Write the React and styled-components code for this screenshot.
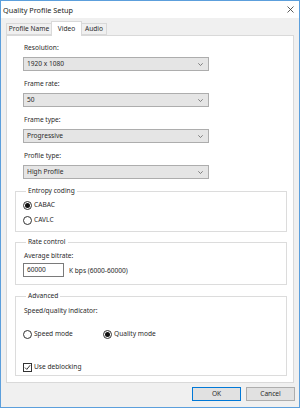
import React from "react";
import styled, { createGlobalStyle } from "styled-components";

const Global = createGlobalStyle`
  html, body { margin: 0; padding: 0; background: #fff; }
  body { font-family: "Noto Sans", "Open Sans", sans-serif; color: #2a2a2a; }
  * { box-sizing: border-box; }
`;

const Window = styled.div`
  width: 300px;
  height: 408px;
  border: 1px solid #5c9fdc;
  background: #f0f0f0;
  display: flex;
  flex-direction: column;
  font-size: 6.6px;
`;

const TitleBar = styled.div`
  height: 17px;
  background: #fff;
  display: flex;
  align-items: center;
  justify-content: space-between;
  padding: 0 5px 0 2px;
  flex-shrink: 0;
`;

const Title = styled.span`
  font-size: 7.3px;
  color: #222;
`;

const Body = styled.div`
  flex: 1;
  display: flex;
  flex-direction: column;
  padding: 3px 5px 0 5px;
`;

const TabStrip = styled.div`
  display: flex;
  align-items: flex-end;
  height: 14px;
`;

const Tab = styled.div`
  width: ${(p) => p.$w}px;
  height: ${(p) => (p.$active ? 15 : 12)}px;
  margin-bottom: ${(p) => (p.$active ? -1 : 0)}px;
  margin-left: ${(p) => (p.$first ? 0 : -1)}px;
  border: 1px solid #d9d9d9;
  border-bottom: ${(p) => (p.$active ? "none" : "1px solid #d9d9d9")};
  background: ${(p) => (p.$active ? "#fff" : "#f0f0f0")};
  position: relative;
  z-index: ${(p) => (p.$active ? 2 : 1)};
  display: flex;
  align-items: center;
  justify-content: center;
  padding-bottom: ${(p) => (p.$active ? 1 : 0)}px;
  line-height: 10px;
`;

const Panel = styled.div`
  height: 348px;
  border: 1px solid #d9d9d9;
  background: #fff;
  padding: 7px 6px 0 8px;
  display: flex;
  flex-direction: column;
`;

const Fields = styled.div`
  display: flex;
  flex-direction: column;
  gap: 8px;
  padding-left: 8px;
`;

const Field = styled.div`
  display: flex;
  flex-direction: column;
  gap: 4px;
`;

const Label = styled.div`
  height: 10px;
  line-height: 10px;
  padding-left: 1px;
  margin-top: ${(p) => p.$mt || 0}px;
`;

const Select = styled.div`
  width: 186px;
  height: 14px;
  background: #e5e5e5;
  border: 1px solid #adadad;
  display: flex;
  align-items: center;
  justify-content: space-between;
  padding: 0 5px 0 3px;
  line-height: 10px;
`;

const Group = styled.fieldset`
  margin: ${(p) => p.$mt}px 0 0 0;
  padding: 0 0 ${(p) => p.$pb}px 7px;
  border: 1px solid #dcdcdc;
  min-inline-size: 0;
  display: flex;
  flex-direction: column;
`;

const Legend = styled.legend`
  padding: 0 2px;
  margin-left: 3px;
  line-height: 10px;
  height: 10px;
`;

const Row = styled.div`
  display: flex;
  align-items: center;
  height: 10px;
  margin-top: ${(p) => p.$mt || 0}px;
`;

const Option = styled.div`
  display: flex;
  align-items: center;
  gap: 2px;
  width: ${(p) => (p.$w ? p.$w + "px" : "auto")};
  line-height: 10px;
`;

const Radio = styled.span`
  width: 9px;
  height: 9px;
  border-radius: 50%;
  border: 1px solid #333;
  background: #fff;
  display: flex;
  align-items: center;
  justify-content: center;
  flex-shrink: 0;
  &::after {
    content: "";
    width: 5px;
    height: 5px;
    border-radius: 50%;
    background: ${(p) => (p.$checked ? "#111" : "transparent")};
  }
`;

const Check = styled.span`
  width: 9px;
  height: 9px;
  border: 1px solid #333;
  background: #fff;
  display: flex;
  align-items: center;
  justify-content: center;
  flex-shrink: 0;
`;

const InputRow = styled.div`
  display: flex;
  align-items: center;
  gap: 5px;
  margin-top: 2px;
`;

const Input = styled.div`
  width: 41px;
  height: 14px;
  border: 1px solid #7a7a7a;
  background: #fff;
  padding-left: 3px;
  display: flex;
  align-items: center;
  line-height: 10px;
`;

const Buttons = styled.div`
  display: flex;
  justify-content: flex-end;
  gap: 5px;
  margin-top: 4px;
  margin-right: -1px;
`;

const Button = styled.div`
  width: 49px;
  height: 14px;
  background: #e1e1e1;
  border: 1px solid ${(p) => (p.$primary ? "#0078d7" : "#adadad")};
  display: flex;
  align-items: center;
  justify-content: center;
  line-height: 10px;
`;

const Chevron = () => (
  <svg width="5" height="3" viewBox="0 0 5 3">
    <path d="M0.3 0.3 L2.5 2.5 L4.7 0.3" fill="none" stroke="#666" strokeWidth="0.8" />
  </svg>
);

const CloseIcon = () => (
  <svg width="7" height="7" viewBox="0 0 7 7">
    <path d="M0.5 0.5 L6.5 6.5 M6.5 0.5 L0.5 6.5" stroke="#333" strokeWidth="0.8" />
  </svg>
);

const CheckMark = () => (
  <svg width="7" height="7" viewBox="0 0 7 7">
    <path d="M1 3.6 L2.8 5.4 L6.2 1.2" fill="none" stroke="#222" strokeWidth="0.9" />
  </svg>
);

const selects = [
  { label: "Resolution:", value: "1920 x 1080" },
  { label: "Frame rate:", value: "50" },
  { label: "Frame type:", value: "Progressive" },
  { label: "Profile type:", value: "High Profile" },
];

export default function App() {
  return (
    <>
      <Global />
      <Window>
        <TitleBar>
          <Title>Quality Profile Setup</Title>
          <CloseIcon />
        </TitleBar>
        <Body>
          <TabStrip>
            <Tab $w={46} $first>Profile Name</Tab>
            <Tab $w={31} $active>Video</Tab>
            <Tab $w={26}>Audio</Tab>
          </TabStrip>
          <Panel>
            <Fields>
              {selects.map((s) => (
                <Field key={s.label}>
                  <Label>{s.label}</Label>
                  <Select>
                    <span>{s.value}</span>
                    <Chevron />
                  </Select>
                </Field>
              ))}
            </Fields>
            <Group $mt={7} $pb={6}>
              <Legend>Entropy coding</Legend>
              <Row $mt={4}>
                <Option>
                  <Radio $checked />
                  CABAC
                </Option>
              </Row>
              <Row $mt={5}>
                <Option>
                  <Radio />
                  CAVLC
                </Option>
              </Row>
            </Group>
            <Group $mt={5} $pb={7}>
              <Legend>Rate control</Legend>
              <Label $mt={4}>Average bitrate:</Label>
              <InputRow>
                <Input>60000</Input>
                <span>K bps (6000-60000)</span>
              </InputRow>
            </Group>
            <Group $mt={6} $pb={3}>
              <Legend>Advanced</Legend>
              <Label $mt={5}>Speed/quality indicator:</Label>
              <Row $mt={13}>
                <Option $w={80}>
                  <Radio />
                  Speed mode
                </Option>
                <Option>
                  <Radio $checked />
                  Quality mode
                </Option>
              </Row>
              <Row $mt={23}>
                <Option>
                  <Check>
                    <CheckMark />
                  </Check>
                  Use deblocking
                </Option>
              </Row>
            </Group>
          </Panel>
          <Buttons>
            <Button $primary>OK</Button>
            <Button>Cancel</Button>
          </Buttons>
        </Body>
      </Window>
    </>
  );
}
